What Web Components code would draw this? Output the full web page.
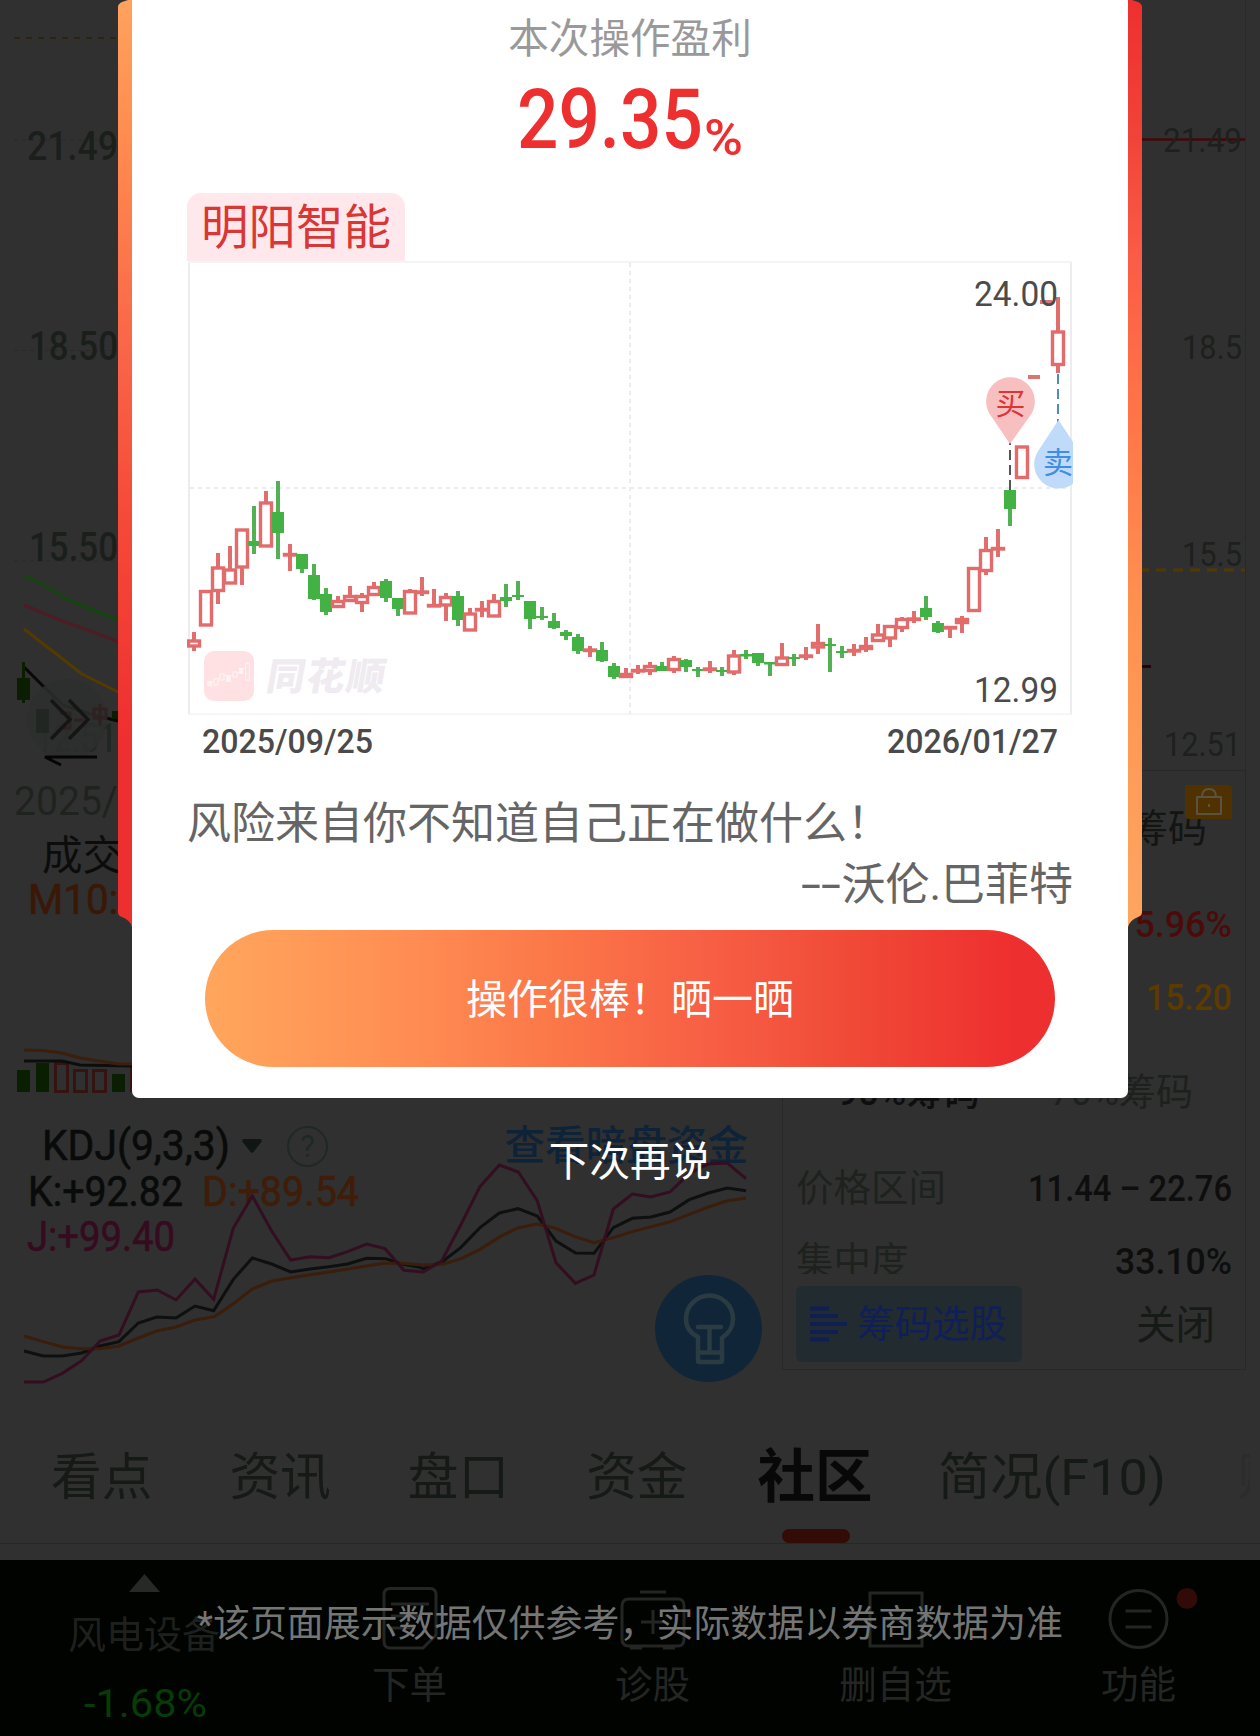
<!DOCTYPE html>
<html lang="zh-CN">
<head>
<meta charset="utf-8">
<title>明阳智能</title>
<style>
  body {
    margin: 0;
    width: 1260px;
    height: 1736px;
    position: relative;
    overflow: hidden;
    background: #303030;
    font-family: Roboto, "Noto Sans CJK SC", sans-serif;
  }
</style>
</head>
<body>
<stock-page></stock-page>
<profit-dialog rate="29.35">
  <span slot="title">本次操作盈利</span>
  <span slot="stock">明阳智能</span>
  <trade-chart slot="chart"></trade-chart>
  <span slot="quote">风险来自你不知道自己正在做什么！</span>
  <span slot="author"><fit-text w="40">--</fit-text>沃伦.巴菲特</span>
  <span slot="action">操作很棒！晒一晒</span>
  <span slot="later">下次再说</span>
  <span slot="note">*该页面展示数据仅供参考，实际数据以券商数据为准</span>
</profit-dialog>

<script>
/**
 * Creates a template from a string.
 */
const makeTemplate = html => {
  const template = document.createElement('template')
  template.innerHTML = html
  return template
}

// kind, high, body top, body bottom, low
const candles = [
  ['r', 632, 641, 646, 651], ['r', 591, 591.5, 625, 625], ['r', 553, 568, 590.5, 604],
  ['r', 546, 570, 583, 583], ['r', 530, 530, 567, 585], ['g', 506, 541, 546, 554],
  ['r', 491, 503, 546, 546], ['g', 481, 512, 533, 559], ['r', 544, 554.5, 555, 571],
  ['g', 554, 554, 569, 573], ['g', 564, 575, 599, 600], ['g', 588, 594, 612, 615],
  ['r', 596, 601.5, 606.5, 607], ['r', 586, 596.5, 600.5, 602], ['r', 593, 596.5, 602.5, 612],
  ['r', 582, 587.5, 594.5, 595], ['g', 579, 581, 598, 602], ['g', 598, 598, 609, 616],
  ['r', 589, 591.5, 613, 613], ['r', 577, 592, 592.5, 596], ['r', 589, 605.5, 606, 607],
  ['r', 593, 597.5, 605, 621], ['g', 591, 596, 620, 626], ['r', 608, 614, 630, 630],
  ['r', 601, 609.5, 610, 617], ['r', 594, 601.5, 616, 616], ['g', 584, 597, 601, 607],
  ['g', 581, 595, 597, 600], ['g', 601, 601, 619, 629], ['g', 607, 616, 618, 620],
  ['g', 613, 621, 628, 629], ['g', 630, 632, 636, 640], ['g', 634, 637, 651, 654],
  ['r', 646, 650, 650.5, 657], ['g', 642, 650, 661, 662], ['g', 663, 666, 677, 679],
  ['r', 668, 674.5, 676.5, 677], ['r', 665, 670.5, 671, 674], ['r', 662, 666.5, 670.5, 675],
  ['g', 662, 666, 671, 671], ['r', 656, 659.5, 669.5, 673], ['g', 659, 660, 667, 672],
  ['g', 667, 669, 671, 677], ['r', 661, 669, 669.5, 673], ['g', 667, 670, 672, 676],
  ['r', 650, 656, 672, 675], ['g', 650, 654, 656.5, 659], ['g', 653, 653, 663, 666],
  ['g', 662, 662, 664.5, 676], ['r', 643, 658, 664.5, 665], ['g', 654, 657, 659, 666],
  ['r', 647, 656, 656.5, 660], ['r', 624, 643.5, 647, 654], ['g', 638, 644, 646, 672],
  ['g', 646, 651, 653, 658], ['r', 644, 650.5, 651, 656], ['r', 637, 646.5, 648.5, 652],
  ['r', 624, 635, 640.5, 641], ['r', 626, 626.5, 638, 647], ['r', 617, 619.5, 627.5, 632],
  ['r', 611, 619, 619.5, 623], ['g', 596, 608, 617, 620], ['g', 621, 623, 632, 633],
  ['r', 627, 627.5, 628, 638], ['r', 616, 619.5, 622.5, 633], ['r', 568, 568.5, 610.5, 611],
  ['r', 537, 550.5, 570.5, 575], ['r', 529, 548.5, 549, 557], ['g', 490, 490, 509, 526],
  ['r', 447, 447, 477.5, 478], ['f', 375, 375, 379, 379], ['f', 300, 300, 304, 304],
  ['r', 297, 332, 364.5, 373]
]

/**
 * Draws one candle as an SVG string.
 */
const drawCandle = ([kind, high, top, bottom, low], index) => {
  const x = 194 + index * 12
  if (kind === 'f') {
    return `<rect x="${x - 6}" y="${top}" width="12" height="4" fill="#dc7474"/>`
  }
  if (kind === 'g') {
    return `<path d="M${x} ${high}V${low}" stroke="#54b054" stroke-width="4"/>
      <rect x="${x - 6}" y="${top}" width="12" height="${bottom - top}" fill="#43b244"/>`
  }
  return `<path d="M${x} ${high}V${top}M${x} ${bottom}V${low}" stroke="#e26d6d" stroke-width="4"/>
    <rect x="${x - 5.5}" y="${top}" width="11" height="${bottom - top}" fill="none" stroke="#e36b6b" stroke-width="3.4"/>`
}

const chartTemplate = makeTemplate(`
  <svg width="886" height="454" viewBox="187 261 886 454">
    <g fill="none" stroke="#ececee" stroke-width="2">
      <path d="M189 262V715M1071 262V715"/>
      <path d="M188 262H1072M188 714.5H1072" stroke="#f4f4f5"/>
      <path d="M190 488H1070M630 263V714" stroke-dasharray="4 4"/>
    </g>
    <g>
      <rect x="204" y="651" width="50" height="50" rx="10" fill="#ffe0e3"/>
      <path d="M209 683L217 680L223 675L229 677L235 674L241 671L247 665" fill="none" stroke="#fff1f2" stroke-width="1"/>
      <g fill="#fff4f5">
        <rect x="207" y="681" width="5" height="5"/>
        <rect x="226" y="675" width="5" height="7"/>
        <rect x="239" y="668" width="4" height="6"/>
      </g>
      <g fill="#ffe0e3" stroke="#fff4f5">
        <rect x="214" y="679" width="4" height="6"/>
        <rect x="220" y="674" width="4" height="6"/>
        <rect x="233" y="672" width="4" height="5"/>
        <rect x="245.500" y="663" width="4" height="17"/>
      </g>
      <text x="0" y="0" transform="translate(265 689.500) skewX(-10)" font-size="38" font-weight="900" fill="#efebf0" textLength="118">同花顺</text>
    </g>
    <g id="candles"></g>
    <g font-size="35" fill="#4b4b4b">
      <text x="974" y="306" textLength="84" lengthAdjust="spacingAndGlyphs">24.00</text>
      <text x="974" y="702" textLength="84" lengthAdjust="spacingAndGlyphs">12.99</text>
    </g>
    <path d="M1010 490V442" stroke="#555" stroke-width="2" stroke-dasharray="10 5"/>
    <path d="M1058 374V422" stroke="#4f8db3" stroke-width="2" stroke-dasharray="10 5"/>
    <path d="M1010 444L990 414.500A24.300 24.300 0 1 1 1031 414.500Z" fill="#f8bfc0"/>
    <path d="M1058.500 420L1038.500 450.500A24.300 24.300 0 1 0 1078.500 450.500Z" fill="#bfdbf9"/>
    <text x="995.500" y="414" font-size="30" fill="#e03334">买</text>
    <text x="1043" y="473" font-size="30" fill="#3f8ee4">卖</text>
  </svg>
  <footer>
    <fit-text w="171">2025/09/25</fit-text>
    <fit-text w="171">2026/01/27</fit-text>
  </footer>
  <style>
    :host {
      display: block;
    }
    svg {
      display: block;
    }
    footer {
      display: flex;
      justify-content: space-between;
      padding: 0 15px;
      height: 54px;
      line-height: 53px;
      font-size: 33px;
      font-weight: 500;
      color: #4a4a4a;
    }
  </style>
`)

customElements.define('trade-chart',
  /**
   * Candle chart with the buy and the sell pin.
   */
  class extends HTMLElement {
    constructor () {
      super()
      this.attachShadow({ mode: 'open' })
        .appendChild(chartTemplate.content.cloneNode(true))
      this.shadowRoot.querySelector('#candles').innerHTML = candles.map(drawCandle).join('')
    }
  }
)

const dialogTemplate = makeTemplate(`
  <div id="frame">
    <svg class="ribbon" width="14" height="927" viewBox="0 0 14 927">
      <defs>
        <linearGradient id="down" x1="0" y1="0" x2="0" y2="1">
          <stop offset="0" stop-color="#ffa25e"/>
          <stop offset=".16" stop-color="#ff8a4e"/>
          <stop offset=".38" stop-color="#f96548"/>
          <stop offset=".54" stop-color="#f64c39"/>
          <stop offset=".8" stop-color="#ee2f2f"/>
          <stop offset="1" stop-color="#ee2f2f"/>
        </linearGradient>
      </defs>
      <path d="M14 0H10L4 2Q0 4 0 7V912Q0 916 4 917Q12 920 14 927Z" fill="url(#down)"/>
    </svg>
    <section>
      <h2><slot name="title"></slot></h2>
      <div id="rate"><fit-text w="186"></fit-text><small><fit-text w="39">%</fit-text></small></div>
      <div id="stock"><slot name="stock"></slot></div>
      <slot name="chart"></slot>
      <p class="quote"><slot name="quote"></slot></p>
      <p class="author"><slot name="author"></slot></p>
      <button><slot name="action"></slot></button>
    </section>
    <svg class="ribbon" width="14" height="927" viewBox="0 0 14 927">
      <defs>
        <linearGradient id="up" x1="0" y1="0" x2="0" y2="1">
          <stop offset="0" stop-color="#ee2f2f"/>
          <stop offset=".15" stop-color="#f14438"/>
          <stop offset=".28" stop-color="#fb5c47"/>
          <stop offset=".42" stop-color="#ff7146"/>
          <stop offset=".66" stop-color="#ff9150"/>
          <stop offset="1" stop-color="#ffa660"/>
        </linearGradient>
      </defs>
      <path d="M0 0H4L10 2Q14 4 14 7V912Q14 916 10 917Q2 920 0 927Z" fill="url(#up)"/>
    </svg>
  </div>
  <div id="later"><slot name="later"></slot></div>
  <div id="note"><fit-text w="866"><slot name="note"></slot></fit-text></div>
  <style>
    :host {
      display: block;
      position: absolute;
      left: 0;
      top: 0;
      width: 1260px;
      height: 1736px;
    }
    #frame {
      display: flex;
      justify-content: center;
      align-items: flex-start;
    }
    section {
      box-sizing: border-box;
      width: 996px;
      height: 1098px;
      padding: 0 55px;
      background: #fff;
      border-radius: 0 0 7px 7px;
    }
    h2 {
      margin: 0;
      height: 78px;
      line-height: 79px;
      text-align: center;
      font-size: 40.6px;
      font-weight: 400;
      color: #999;
    }
    #rate {
      height: 115px;
      line-height: 84px;
      margin-left: 330px;
      font-size: 83px;
      font-weight: 500;
      color: #ee2f2f;
      white-space: nowrap;
    }
    small {
      font-size: 50px;
      margin-left: 1px;
      position: relative;
      top: 7px;
    }
    #stock {
      width: 218px;
      height: 68px;
      line-height: 70px;
      text-align: center;
      background: #ffe8ec;
      border-radius: 14px 14px 0 0;
      font-size: 47.5px;
      color: #d93735;
    }
    p {
      margin: 0;
      height: 61px;
      line-height: 63px;
      font-size: 44px;
      color: #656565;
      white-space: nowrap;
    }
    .quote {
      margin-top: 24px;
    }
    .author {
      text-align: right;
    }
    button {
      display: block;
      width: 850px;
      height: 137px;
      margin: 15px auto 0;
      padding: 2px 0 0;
      border: none;
      border-radius: 69px;
      background: linear-gradient(90deg, #ffa65c, #ff8d53 24%, #fb7648 42%, #f75e44 60%, #f04a37 76%, #ee2f2f 95%);
      font: inherit;
      font-size: 41px;
      line-height: 136px;
      color: #fff;
    }
    #later {
      height: 124px;
      line-height: 128px;
      text-align: center;
      font-size: 40.6px;
      color: #fff;
    }
    #note {
      height: 60px;
      line-height: 63px;
      margin-top: 371px;
      text-align: center;
      font-size: 37px;
      color: #747574;
    }
  </style>
`)

customElements.define('profit-dialog',
  /**
   * Represents the profit dialog above the stock page.
   */
  class extends HTMLElement {
    constructor () {
      super()
      const content = dialogTemplate.content.cloneNode(true)
      content.querySelector('#rate fit-text').textContent = this.getAttribute('rate')
      this.attachShadow({ mode: 'open' }).appendChild(content)
    }
  }
)

const klineTemplate = makeTemplate(`
  <svg width="782" height="831" viewBox="0 0 782 831">
    <path d="M14 38H130" stroke="#2b2510" stroke-width="2" stroke-dasharray="6 6"/>
    <path d="M14 140H130M14 350.500H130M14 561H130" stroke="#292929" stroke-dasharray="4 4"/>
    <g fill="#1b1f1c" font-size="41" font-weight="500">
      <text x="27" y="160" textLength="91" lengthAdjust="spacingAndGlyphs">21.49</text>
      <text x="29" y="359.500" textLength="89" lengthAdjust="spacingAndGlyphs">18.50</text>
      <text x="29" y="560.500" textLength="89" lengthAdjust="spacingAndGlyphs">15.50</text>
      <text x="35" y="752" textLength="82" lengthAdjust="spacingAndGlyphs" fill="#222622">12.51</text>
      <text x="14" y="815" textLength="208" lengthAdjust="spacingAndGlyphs" fill="#1f231f" font-weight="400">2025/10/28</text>
    </g>
    <g fill="none" stroke-width="3">
      <path d="M24 576L43 584L63 597L82 605.500L100 613L130 624" stroke="#14450f"/>
      <path d="M24 605L62 621L82 628L130 646" stroke="#4d1c25"/>
      <path d="M24 629L82 674L130 698" stroke="#533b00"/>
      <path d="M24 667L42 685L63 705L90 714L118 721" stroke="#080808"/>
    </g>
    <path d="M23.500 662V703" stroke="#0a1e02" stroke-width="3"/>
    <path d="M17 678H30V700H17ZM112 711H125V719H112Z" fill="#0a1e02"/>
    <circle cx="67" cy="719" r="40" fill="#2b2f2d" opacity=".85"/>
    <path d="M36 709H49V733H36Z" fill="#222623"/>
    <path d="M100 704V726M94 709H106V718H94ZM60 713H70V728H60M74 720H84" fill="none" stroke="#2f2021" stroke-width="3"/>
    <path d="M51 700L70 719.500L51 739M69 700L88 719.500L69 739" fill="none" stroke="#141514" stroke-width="3.500"/>
    <path d="M97 757H45L61 765" fill="none" stroke="#050505" stroke-width="3"/>
  </svg>
`)

const volumeTemplate = makeTemplate(`
  <svg width="782" height="203" viewBox="0 917 782 203">
    <path d="M17 1070H30V1092H17ZM36 1063H49V1092H36ZM112 1074H125V1092H112Z" fill="#0a1e02"/>
    <path d="M55.500 1063.500H67.500V1091.500H55.500ZM74.500 1070.500H86.500V1091.500H74.500ZM93.500 1070.500H105.500V1091.500H93.500ZM131.500 1066V1092" fill="none" stroke="#351310" stroke-width="3"/>
    <path d="M24 1061H62L80 1065L132 1066" fill="none" stroke="#0c0e0e" stroke-width="3"/>
    <path d="M24 1050L43 1050.500L62 1053L80 1058L118 1064H132" fill="none" stroke="#3b1e0c" stroke-width="3"/>
  </svg>
`)

const kdjTemplate = makeTemplate(`
  <svg width="782" height="252" viewBox="0 1172 782 252">
    <g font-size="42" stroke-width=".6">
      <text x="28" y="1206" textLength="155" lengthAdjust="spacingAndGlyphs" fill="#090b0b" stroke="#090b0b">K:+92.82</text>
      <text x="202" y="1206" textLength="157" lengthAdjust="spacingAndGlyphs" fill="#3f1d08" stroke="#3f1d08">D:+89.54</text>
      <text x="27" y="1251" textLength="148" lengthAdjust="spacingAndGlyphs" fill="#350b20" stroke="#350b20">J:+99.40</text>
    </g>
    <g fill="none" stroke-width="9" transform="translate(0 1100) scale(.33333)">
      <path stroke="#0e1010" d="M72 753L130 768H187L245 759L300 738L357 725L415 669L470 651L528 654L585 618L641 632L700 538L757 474L815 492L872 516L930 507L987 500L1043 492L1100 475L1157 476L1205 492L1260 502L1270 506L1327 485L1382 443L1440 383L1498 339L1554 326L1612 348L1668 423L1727 459L1782 460L1840 383L1897 355L1953 351L2010 336L2068 299L2125 279L2182 264L2238 272"/>
      <path stroke="#3b1d0b" d="M72 708L130 725L187 741L245 746H300L357 738L415 714L470 693L528 681L585 660L643 650L700 611L757 567L815 543L870 534L930 524L987 516L1043 507L1100 498L1150 490L1200 490L1270 495L1327 493L1385 475L1440 448L1500 410L1555 383L1612 372L1668 385L1725 410L1782 428L1840 413L1897 395L1955 380L2012 365L2068 343L2125 321L2180 303L2238 294"/>
      <path stroke="#330e20" d="M72 846H130L187 820L245 782L300 723L357 705L415 576L472 570L528 600L585 537L641 598L700 384L757 288L815 393L872 480L930 470L987 473L1043 455L1100 432L1155 446L1212 511L1270 516L1325 483L1382 375L1440 260L1498 195L1555 216L1612 303L1668 488L1726 550L1782 525L1840 327L1897 282L1952 291L2010 276L2068 220L2125 192L2182 189L2238 236"/>
    </g>
    <circle cx="708.500" cy="1328.500" r="53.500" fill="#102638"/>
    <g fill="none" stroke="#2b3b42" stroke-width="4.500" stroke-linejoin="round" stroke-linecap="round">
      <path d="M698 1341V1337C690 1333 686 1328 686 1319A23.500 23.500 0 1 1 733 1319C733 1328 729 1333 722 1338V1361Q722 1362 720 1362H700Q698 1362 698 1361Z"/>
      <path d="M698 1327H721M709.500 1327V1352M698 1352.500H722"/>
    </g>
  </svg>
`)

const axisTemplate = makeTemplate(`
  <svg width="478" height="770" viewBox="782 0 478 770">
    <path d="M1245.500 0V770" stroke="#292929"/>
    <path d="M1140 139.500H1245" stroke="#400808" stroke-width="2.500"/>
    <path d="M1139 570H1245" stroke="#523800" stroke-width="3" stroke-dasharray="10 7"/>
    <path d="M1140 666.500H1151" stroke="#290303" stroke-width="3"/>
    <g font-size="33" fill="#1d201d">
      <text x="1163" y="152" textLength="79" lengthAdjust="spacingAndGlyphs">21.49</text>
      <text x="1182" y="359" textLength="60" lengthAdjust="spacingAndGlyphs">18.5</text>
      <text x="1182" y="566" textLength="60" lengthAdjust="spacingAndGlyphs">15.5</text>
      <text x="1164" y="756" textLength="77" lengthAdjust="spacingAndGlyphs">12.51</text>
    </g>
  </svg>
`)

for (const [name, template] of [
  ['kline-chart', klineTemplate], ['volume-chart', volumeTemplate],
  ['kdj-chart', kdjTemplate], ['price-axis', axisTemplate]
]) {
  customElements.define(name, class extends HTMLElement {
    constructor () {
      super()
      const style = document.createElement('style')
      style.textContent = ':host, svg { display: block; overflow: visible; }'
      this.attachShadow({ mode: 'open' }).append(template.content.cloneNode(true), style)
    }
  })
}

const chipTemplate = makeTemplate(`
  <div class="row head"><span>筹码</span>
    <svg width="47" height="34" viewBox="0 0 47 34">
      <path d="M0 0H43Q47 0 47 5V34H4Q0 34 0 30Z" fill="#503200"/>
      <path d="M12 12H36V29H12ZM17 12Q17 4 24 4Q31 4 31 12M24 19V22" fill="none" stroke="#5a5344" stroke-width="2" stroke-linejoin="round"/>
    </svg>
  </div>
  <div class="row profit"><fit-text w="118">75.96%</fit-text></div>
  <div class="row cost"><fit-text w="86">15.20</fit-text></div>
  <div class="tabs"><fit-text w="143" class="on">90%筹码</fit-text><fit-text w="143">70%筹码</fit-text></div>
  <div class="row"><label>价格区间</label><fit-text w="204">11.44 – 22.76</fit-text></div>
  <div class="row cut"><label>集中度</label><fit-text w="117">33.10%</fit-text></div>
  <div class="tools">
    <div class="pick">
      <svg width="38" height="36" viewBox="0 0 38 36">
        <path d="M0 2.500H19M0 10H28M0 18H37M0 26H28M0 33.500H19" stroke="#0f1f56" stroke-width="4"/>
      </svg>
      <span>筹码选股</span>
    </div>
    <div class="close">关闭</div>
  </div>
  <style>
    :host {
      display: block;
      box-sizing: border-box;
      width: 464px;
      height: 600px;
      border: 1px solid #282828;
      padding: 0 13px;
      font-size: 37.5px;
      color: #0d0e0d;
    }
    .row {
      display: flex;
      justify-content: space-between;
      height: 73px;
      line-height: 76px;
      font-weight: 500;
    }
    label {
      font-weight: 400;
      color: #1e221e;
    }
    .row.head {
      position: relative;
      justify-content: flex-end;
      height: 111px;
      line-height: 116px;
      padding-right: 25px;
      font-size: 39px;
      font-weight: 400;
      color: #121512;
    }
    .head svg {
      position: absolute;
      right: 0;
      top: 14px;
    }
    .row.profit {
      justify-content: flex-end;
      height: 83px;
      line-height: 84px;
      color: #4c0b0b;
    }
    .row.cost {
      justify-content: flex-end;
      height: 62px;
      line-height: 64px;
      color: #5c3b00;
    }
    .tabs {
      display: flex;
      justify-content: space-between;
      height: 80px;
      line-height: 84px;
      padding: 0 39px 0 41px;
      margin: 23px 0 20px;
      color: #1d211d;
    }
    .on {
      color: #0d0e0d;
      font-weight: 500;
    }
    .row.cut {
      height: 51px;
      line-height: 76px;
      overflow: hidden;
    }
    .tools {
      display: flex;
      justify-content: space-between;
      margin-top: 12px;
    }
    .pick {
      display: flex;
      align-items: center;
      width: 226px;
      height: 76px;
      line-height: 80px;
      box-sizing: border-box;
      padding-left: 14px;
      gap: 9px;
      white-space: nowrap;
      background: #222b2f;
      border-radius: 6px;
      color: #101f58;
    }
    .close {
      padding-right: 17px;
      line-height: 79px;
      font-size: 39.5px;
      color: #161a17;
    }
  </style>
`)

customElements.define('chip-panel',
  /**
   * Chip distribution panel on the right side.
   */
  class extends HTMLElement {
    constructor () {
      super()
      this.attachShadow({ mode: 'open' })
        .appendChild(chipTemplate.content.cloneNode(true))
    }
  }
)

const navTemplate = makeTemplate(`
  <slot name="icon"></slot>
  <span><slot></slot></span>
  <style>
    :host {
      display: flex;
      flex-direction: column;
      align-items: center;
      padding-top: 26px;
      font-size: 37.5px;
      color: #242624;
    }
    span {
      height: 64px;
      line-height: 68px;
      margin-top: 1px;
    }
    ::slotted(svg) {
      display: block;
      overflow: visible;
      fill: none;
      stroke: #242624;
      stroke-width: 3px;
    }
  </style>
`)

customElements.define('nav-item',
  /**
   * Icon with a label in the bottom bar.
   */
  class extends HTMLElement {
    constructor () {
      super()
      this.attachShadow({ mode: 'open' })
        .appendChild(navTemplate.content.cloneNode(true))
    }
  }
)

const pageTemplate = makeTemplate(`
  <main>
    <div class="left">
      <kline-chart></kline-chart>
      <div class="volume">成交量</div>
      <div class="m10"><fit-text w="113">M10:9</fit-text></div>
      <volume-chart></volume-chart>
      <div class="kdj">
        <fit-text w="188">KDJ(9,3,3)</fit-text>
        <svg width="20" height="14" viewBox="0 0 20 14"><path d="M1 0H19L20 2L11.500 13Q10 14.500 8.500 13L0 2Z" fill="#101613"/></svg>
        <i>?</i>
        <b>查看暗盘资金</b>
      </div>
      <kdj-chart></kdj-chart>
    </div>
    <div class="right">
      <price-axis></price-axis>
      <chip-panel></chip-panel>
    </div>
  </main>
  <nav>
    <span>看点</span><span>资讯</span><span>盘口</span><span>资金</span>
    <span class="active">社区</span>
    <span class="brief"><fit-text w="228">简况(F10)</fit-text></span>
    <span class="more">财</span>
  </nav>
  <footer>
    <div class="index">
      <svg width="31" height="18" viewBox="0 0 31 18"><path d="M15.500 0L31 18H0Z" fill="#272927"/></svg>
      <span>风电设备</span>
      <fit-text w="123">-1.68%</fit-text>
    </div>
    <nav-item>
      <svg slot="icon" width="56" height="64" viewBox="0 0 56 64">
        <path d="M8 2.500H48Q54 2.500 54 9V49L41 62H8Q2 62 2 55V9Q2 2.500 8 2.500ZM9 18H47M9 30H40M9 42H32"/>
      </svg>下单</nav-item>
    <nav-item>
      <svg slot="icon" width="66" height="64" viewBox="0 0 66 64">
        <path d="M20 6H46M9 13H58Q64 13 64 20V53Q64 60 58 60H9Q2 60 2 53V20Q2 13 9 13ZM33 24V48M21 36H45M10 62H22M43 62H55"/>
      </svg>诊股</nav-item>
    <nav-item>
      <svg slot="icon" width="56" height="64" viewBox="0 0 56 64">
        <path d="M2 7H54V60H2ZM15 33H41"/>
      </svg>删自选</nav-item>
    <nav-item>
      <svg slot="icon" width="60" height="64" viewBox="0 0 60 64">
        <circle cx="29.500" cy="33" r="28.500"/><path d="M16.500 25H42.500M16.500 41H42.500"/>
        <circle cx="78" cy="12.500" r="10.500" style="fill:#300b08;stroke:none"/>
      </svg>功能</nav-item>
  </footer>
  <style>
    :host {
      display: block;
    }
    main {
      display: grid;
      grid-template-columns: 782px 478px;
      height: 1424px;
    }
    .volume {
      height: 50px;
      line-height: 51px;
      padding-left: 42px;
      font-size: 40.5px;
      color: #0b0c0b;
    }
    .m10 {
      height: 36px;
      line-height: 37px;
      padding-left: 28px;
      font-size: 42px;
      color: #3a1807;
      -webkit-text-stroke: .6px;
    }
    .kdj {
      display: flex;
      align-items: center;
      height: 52px;
      line-height: 58px;
      padding: 0 34px 0 42px;
      font-size: 42px;
      color: #090b0b;
    }
    .kdj fit-text {
      -webkit-text-stroke: .6px;
    }
    .kdj svg {
      margin: 0 25px 0 12px;
    }
    .kdj i {
      box-sizing: border-box;
      width: 41px;
      height: 41px;
      line-height: 38px;
      border: 2px solid #202823;
      border-radius: 50%;
      text-align: center;
      font-size: 31px;
      font-style: normal;
      color: #202823;
    }
    .kdj b {
      margin-left: auto;
      font-size: 40.6px;
      font-weight: 500;
      color: #0e2238;
    }
    nav {
      box-sizing: border-box;
      display: flex;
      gap: 77px;
      height: 120px;
      line-height: 108px;
      padding-left: 51px;
      overflow: hidden;
      border-bottom: 1px solid #272727;
      white-space: nowrap;
      font-size: 50.7px;
      color: #151a16;
    }
    .active {
      position: relative;
      margin-left: -7px;
      font-size: 57.5px;
      font-weight: 700;
      line-height: 107px;
      color: #070807;
    }
    .active::after {
      content: "";
      position: absolute;
      left: 24px;
      bottom: 0;
      width: 68px;
      height: 14px;
      border-radius: 7px;
      background: #330c08;
    }
    .brief {
      margin-left: -12px;
    }
    .more {
      margin-left: -5px;
      width: 12px;
      overflow: hidden;
      color: #2a2d2a;
    }
    footer {
      display: grid;
      grid-template-columns: 288px repeat(4, 1fr);
      height: 176px;
      margin-top: 16px;
      background: #000300;
    }
    .index {
      display: flex;
      flex-direction: column;
      align-items: center;
      padding-top: 14px;
      font-size: 38px;
      color: #1e201e;
    }
    .index span {
      height: 78px;
      line-height: 86px;
    }
    .index fit-text {
      height: 60px;
      line-height: 68px;
      margin-left: 3px;
      font-size: 39px;
      color: #063c06;
    }
  </style>
`)

customElements.define('stock-page',
  /**
   * Represents the dimmed stock page.
   */
  class extends HTMLElement {
    constructor () {
      super()
      this.attachShadow({ mode: 'open' })
        .appendChild(pageTemplate.content.cloneNode(true))
    }
  }
)

const fitTemplate = makeTemplate(`
  <span><slot></slot></span>
  <style>
    :host {
      display: inline-block;
      white-space: nowrap;
      text-align: left;
    }
    span {
      display: inline-block;
      transform-origin: 0 50%;
    }
  </style>
`)

// defined last, it measures with the fonts that the other elements set
customElements.define('fit-text',
  /**
   * Text squeezed or stretched to the width given in the w attribute.
   */
  class extends HTMLElement {
    constructor () {
      super()
      this.attachShadow({ mode: 'open' })
        .appendChild(fitTemplate.content.cloneNode(true))
    }

    connectedCallback () {
      const width = Number(this.getAttribute('w'))
      const span = this.shadowRoot.querySelector('span')
      const natural = span.getBoundingClientRect().width
      if (width && natural) {
        this.style.width = `${width}px`
        span.style.transform = `scaleX(${width / natural})`
      }
    }
  }
)
</script>
</body>
</html>
